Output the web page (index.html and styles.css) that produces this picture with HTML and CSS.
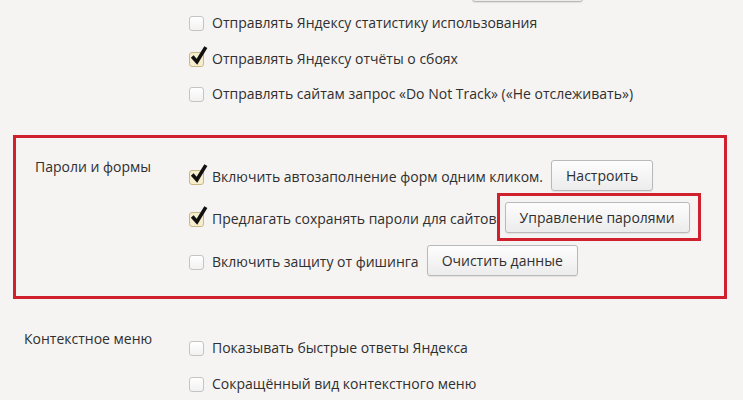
FILE: index.html
```html
<!DOCTYPE html>
<html lang="ru">
<head>
    <meta charset="UTF-8">
    <meta name="viewport" content="width=device-width, initial-scale=1.0">
    <title>Настройки</title>
    <link rel="stylesheet" href="styles.css">
</head>
<body>
    <div class="settings">

        <section class="group group-privacy">
            <div class="options">
                <div class="option-cut">
                    <button class="btn btn-cut" aria-label="Очистить историю"></button>
                </div>
                <label class="option">
                    <span class="box"></span>
                    Отправлять Яндексу статистику использования
                </label>
                <label class="option">
                    <span class="box checked">
                        <svg class="tick" viewBox="0 0 18 20"><path d="M3 11 L7.5 16 L16 2"/></svg>
                    </span>
                    Отправлять Яндексу отчёты о сбоях
                </label>
                <label class="option">
                    <span class="box"></span>
                    Отправлять сайтам запрос «Do Not Track» («Не отслеживать»)
                </label>
            </div>
        </section>

        <section class="group group-passwords">
            <div class="group-label">Пароли и формы</div>
            <div class="options">
                <div class="option">
                    <span class="box checked">
                        <svg class="tick" viewBox="0 0 18 20"><path d="M3 11 L7.5 16 L16 2"/></svg>
                    </span>
                    Включить автозаполнение форм одним кликом.
                    <button class="btn btn-setup">Настроить</button>
                </div>
                <div class="option">
                    <span class="box checked">
                        <svg class="tick" viewBox="0 0 18 20"><path d="M3 11 L7.5 16 L16 2"/></svg>
                    </span>
                    <span class="option-text-cut">Предлагать сохранять пароли для сайтов</span>
                    <span class="mark">
                        <button class="btn btn-manage">Управление паролями</button>
                    </span>
                </div>
                <div class="option">
                    <span class="box"></span>
                    Включить защиту от фишинга
                    <button class="btn btn-clear">Очистить данные</button>
                </div>
            </div>
        </section>

        <section class="group group-menu">
            <div class="group-label">Контекстное меню</div>
            <div class="options">
                <label class="option">
                    <span class="box"></span>
                    Показывать быстрые ответы Яндекса
                </label>
                <label class="option">
                    <span class="box"></span>
                    Сокращённый вид контекстного меню
                </label>
            </div>
        </section>

    </div>
</body>
</html>
```

FILE: styles.css
```css
body {
    margin: 0;
    background-color: #f5f4f2;
    font-family: "Open Sans", "Noto Sans", sans-serif;
    font-size: 14px;
    color: #2f2f2f;
    overflow: hidden;
    height: 400px;
}

.settings {
    display: flex;
    flex-direction: column;
}

.group {
    display: flex;
    align-items: flex-start;
}

.group-label {
    line-height: 20px;
}

.options {
    display: flex;
    flex-direction: column;
}

.option {
    display: flex;
    align-items: center;
    height: 35.5px;
    white-space: nowrap;
}

.box {
    position: relative;
    flex: none;
    width: 13px;
    height: 13px;
    margin-right: 8px;
    margin-top: 2px;
    border: 1px solid #c4c4c4;
    border-radius: 3px;
    background: linear-gradient(#ffffff, #f1f1f1);
}

.box.checked {
    background: #f7eecb;
    border-color: #c9b785;
}

.tick {
    position: absolute;
    left: -1px;
    top: -8px;
    width: 19px;
    height: 21px;
    fill: none;
    stroke: #111;
    stroke-width: 3.4;
    stroke-linejoin: miter;
}

.btn {
    font-family: inherit;
    font-size: 14px;
    color: #2f2f2f;
    height: 31px;
    padding: 0 14px;
    margin-left: 8px;
    border: 1px solid #b9b9b9;
    border-radius: 3px;
    background: linear-gradient(#fdfdfd, #ececec);
    box-shadow: 0 1px 1px rgba(0, 0, 0, 0.08);
    margin-top: -1px;
}

/* privacy block, its top is scrolled off */
.group-privacy {
    padding-left: 189px;
}

.option-cut {
    height: 31px;
    margin-top: -29px;
    margin-bottom: 3px;
    padding-left: 283px;
}

.btn-cut {
    display: block;
    width: 111px;
    margin: 0;
}

/* highlighted block */
.group-passwords {
    margin-top: 23.5px;
    margin-left: 13px;
    width: 714px;
    box-sizing: border-box;
    border: 3px solid #d0202e;
    padding: 17px 0 13px 19px;
}

.group-passwords .group-label {
    width: 154px;
    margin-top: 2px;
}

.group-passwords .option {
    height: 42.5px;
}

.option-text-cut {
    display: inline-block;
}

.mark {
    display: inline-flex;
    border: 3px solid #d0202e;
    padding: 6px 8px 5px 5px;
    margin-top: -4px;
}

.mark .btn {
    margin: 0;
}

.group-menu {
    margin-top: 30px;
    padding-left: 24px;
}

.group-menu .group-label {
    width: 165px;
}

.group-menu .options {
    padding-top: 1.5px;
}
```
